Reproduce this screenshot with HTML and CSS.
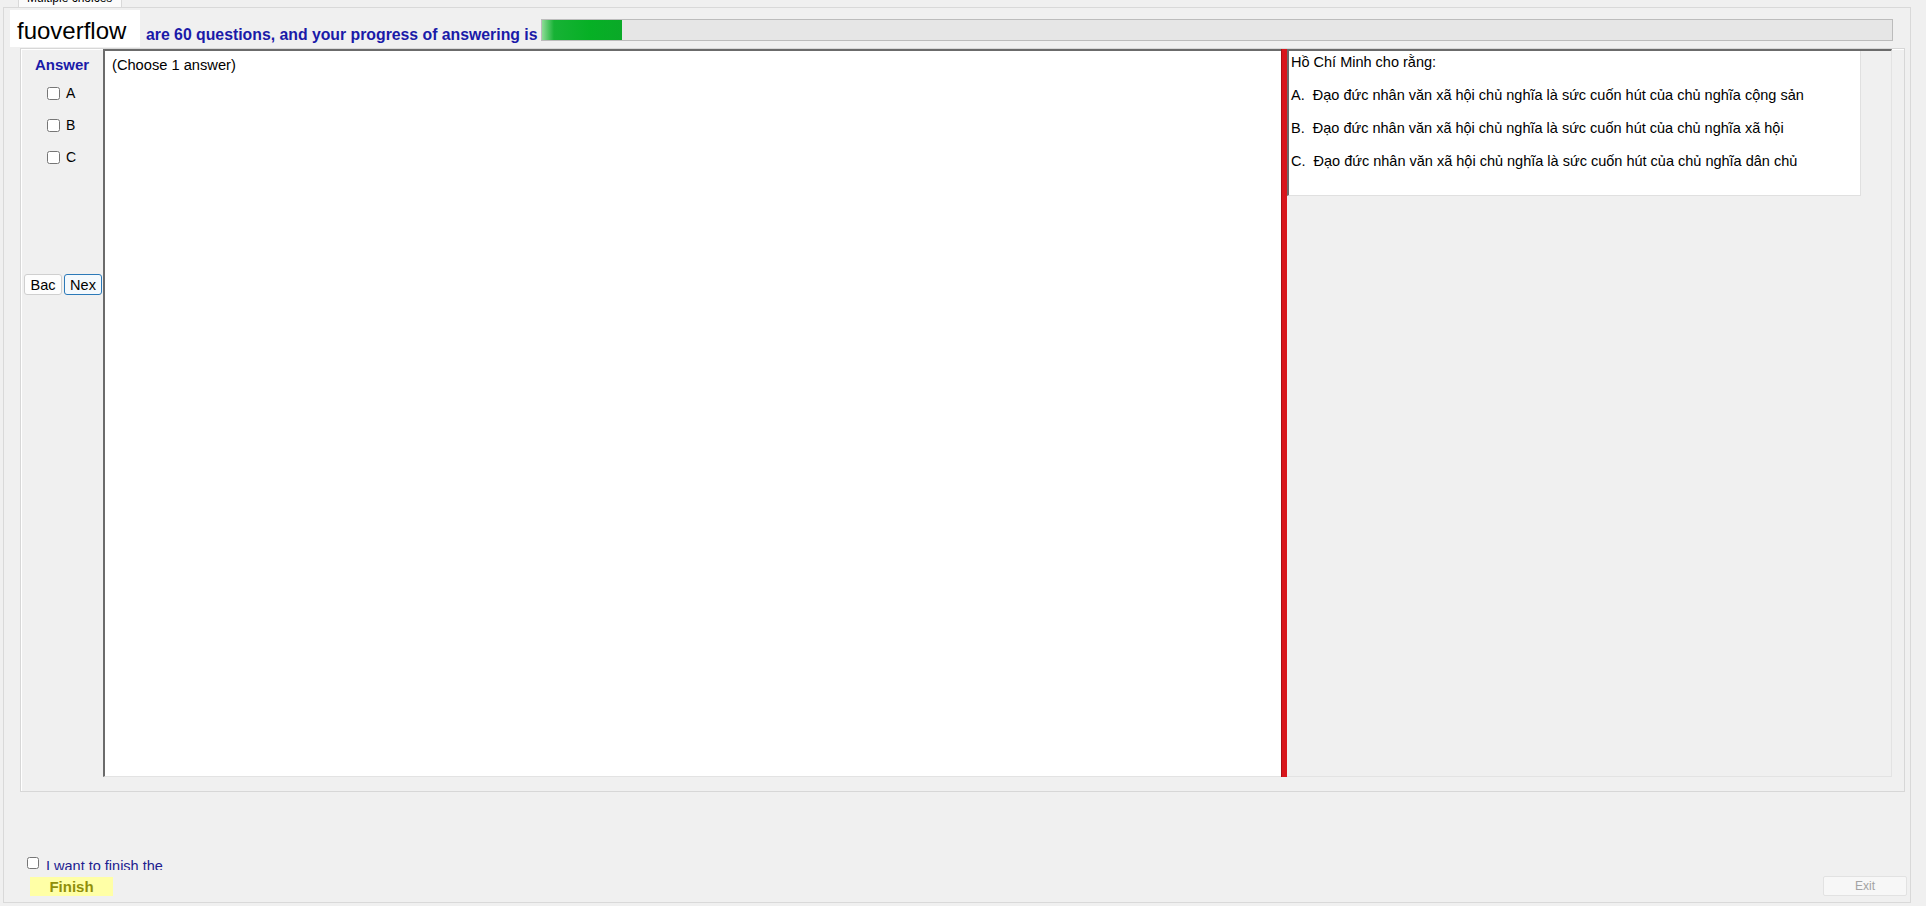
FILE: index.html
```html
<!DOCTYPE html>
<html>
<head>
  <title>Multiple choices</title>
  <link rel="stylesheet" href="styles.css">
</head>
<body>
  <div class="tabs">
    <div class="tab"><span>Multiple choices</span></div>
  </div>

  <div class="tab-page">
    <div class="header">
      <div class="brand">fuoverflow</div>
      <div class="progress-label">are 60 questions, and your progress of answering is</div>
      <div class="progress"><div class="progress-fill"></div></div>
    </div>

    <div class="frame">
      <div class="answers">
        <div class="answers-title">Answer</div>
        <label class="choice"><input type="checkbox"> A</label>
        <label class="choice"><input type="checkbox"> B</label>
        <label class="choice"><input type="checkbox"> C</label>
        <div class="nav">
          <button class="btn-nav">Bac</button>
          <button class="btn-nav btn-default">Nex</button>
        </div>
      </div>

      <div class="split">
        <div class="question-pane">(Choose 1 answer)</div>
        <div class="splitter"></div>
        <div class="choices-pane">
          <div class="question-box">
            <p>Hồ Chí Minh cho rằng:</p>
            <p>A.  Đạo đức nhân văn xã hội chủ nghĩa là sức cuốn hút của chủ nghĩa cộng sản</p>
            <p>B.  Đạo đức nhân văn xã hội chủ nghĩa là sức cuốn hút của chủ nghĩa xã hội</p>
            <p>C.  Đạo đức nhân văn xã hội chủ nghĩa là sức cuốn hút của chủ nghĩa dân chủ</p>
          </div>
        </div>
      </div>
    </div>

    <div class="footer">
      <div class="finish-col">
        <label class="confirm"><input type="checkbox"><span>I want to finish the exam</span></label>
        <button class="btn-finish">Finish</button>
      </div>
      <button class="btn-exit" disabled>Exit</button>
    </div>
  </div>
</body>
</html>
```

FILE: styles.css
```css
body { margin: 0; background-color: #f0f0f0; font-family: "Liberation Sans", Arial, sans-serif; color: #000; overflow: hidden; }

.tabs { height: 7px; display: flex; }
.tab { margin-left: 18px; width: 104px; height: 7px; overflow: hidden; background-color: #fbfbfb; border: 1px solid #d9d9d9; border-top: none; border-bottom: none; box-sizing: border-box; }
.tab span { display: block; margin-top: -9px; padding-left: 8px; font-size: 12px; line-height: 14px; white-space: nowrap; }

.tab-page { margin-left: 3px; width: 1908px; height: 896px; border: 1px solid #d9d9d9; box-sizing: border-box; display: flex; flex-direction: column; }

.header { display: flex; align-items: flex-start; }
.brand { margin: 2px 0 0 6px; width: 130px; height: 37px; overflow: hidden; background-color: #fff; font-size: 24px; line-height: 41px; padding-left: 7px; box-sizing: border-box; }
.progress-label { margin: 18px 0 0 6px; font-size: 15.8px; line-height: 18px; font-weight: bold; color: #1a1aa8; white-space: nowrap; }
.progress { flex: 1; margin: 11px 17px 0 3px; height: 22px; background-color: #e6e6e6; border: 1px solid #bcbcbc; box-sizing: border-box; }
.progress-fill { width: 80px; height: 100%; background: linear-gradient(to right, #8edb97, #17b235 15%, #06b025 60%, #0aa928); }

.frame { margin: 1px 5px 0 16px; height: 744px; border: 1px solid #d7d7d7; box-shadow: inset 1px 1px 0 #fff; box-sizing: border-box; display: flex; align-items: flex-start; }

.answers { width: 82px; display: flex; flex-direction: column; }
.answers-title { margin-top: 7px; text-align: center; font-size: 15px; line-height: 18px; font-weight: bold; color: #1a1aa8; }
.choice { display: flex; align-items: center; height: 32px; padding-left: 26px; font-size: 14px; gap: 6px; }
.choice:first-of-type { margin-top: 3px; }
.choice input { margin: 0; width: 13px; height: 13px; }
.nav { display: flex; gap: 2px; margin: 101px 0 0 3px; }
.btn-nav { width: 38px; height: 21px; padding: 0; font-family: inherit; font-size: 14.5px; background-color: #fdfdfd; border: 1px solid #cfcfcf; border-radius: 3px; color: #000; }
.btn-default { border-color: #2b79b8; background-color: #f4f9fd; }

.split { width: 1789px; height: 728px; display: flex; }
.question-pane { width: 1178px; background-color: #fff; border-top: 2px solid #6b6b6b; border-left: 2px solid #6b6b6b; border-bottom: 1px solid #e3e3e3; box-sizing: border-box; padding: 6px 0 0 7px; font-size: 14.67px; line-height: 17px; }
.splitter { width: 6px; background-color: #d8161c; border-left: 1px solid #a81015; box-sizing: border-box; }
.choices-pane { flex: 1; border-top: 2px solid #6b6b6b; border-right: 1px solid #e3e3e3; border-bottom: 1px solid #e3e3e3; box-sizing: border-box; }
.question-box { width: 574px; height: 145px; background-color: #fff; border-left: 2px solid #6b6b6b; border-right: 1px solid #e0e0e0; border-bottom: 1px solid #e0e0e0; box-sizing: border-box; padding: 3px 0 0 2px; }
.question-box p { margin: 0 0 16px; font-size: 14.5px; line-height: 17px; white-space: pre; }

.footer { margin-top: 65px; display: flex; justify-content: space-between; align-items: flex-end; }
.finish-col { display: flex; flex-direction: column; align-items: flex-start; }
.confirm { display: flex; align-items: flex-start; height: 13px; overflow: hidden; margin-left: 23px; }
.confirm input { margin: 0; width: 12px; height: 12px; }
.confirm span { margin-left: 7px; font-size: 14.5px; line-height: 19px; color: #20208f; white-space: nowrap; width: 119px; overflow: hidden; }
.btn-finish { margin: 7px 0 0 26px; width: 83px; height: 19px; padding: 0; border: none; background-color: #ffffa6; font-family: inherit; font-size: 15px; font-weight: bold; color: #8f8f0a; }
.btn-exit { margin: 0 3px 0 0; width: 84px; height: 20px; padding: 0; background-color: #f7f7f7; border: 1px solid #e2e2e2; border-radius: 2px; font-family: inherit; font-size: 12px; color: #a3a3a3; }
```
